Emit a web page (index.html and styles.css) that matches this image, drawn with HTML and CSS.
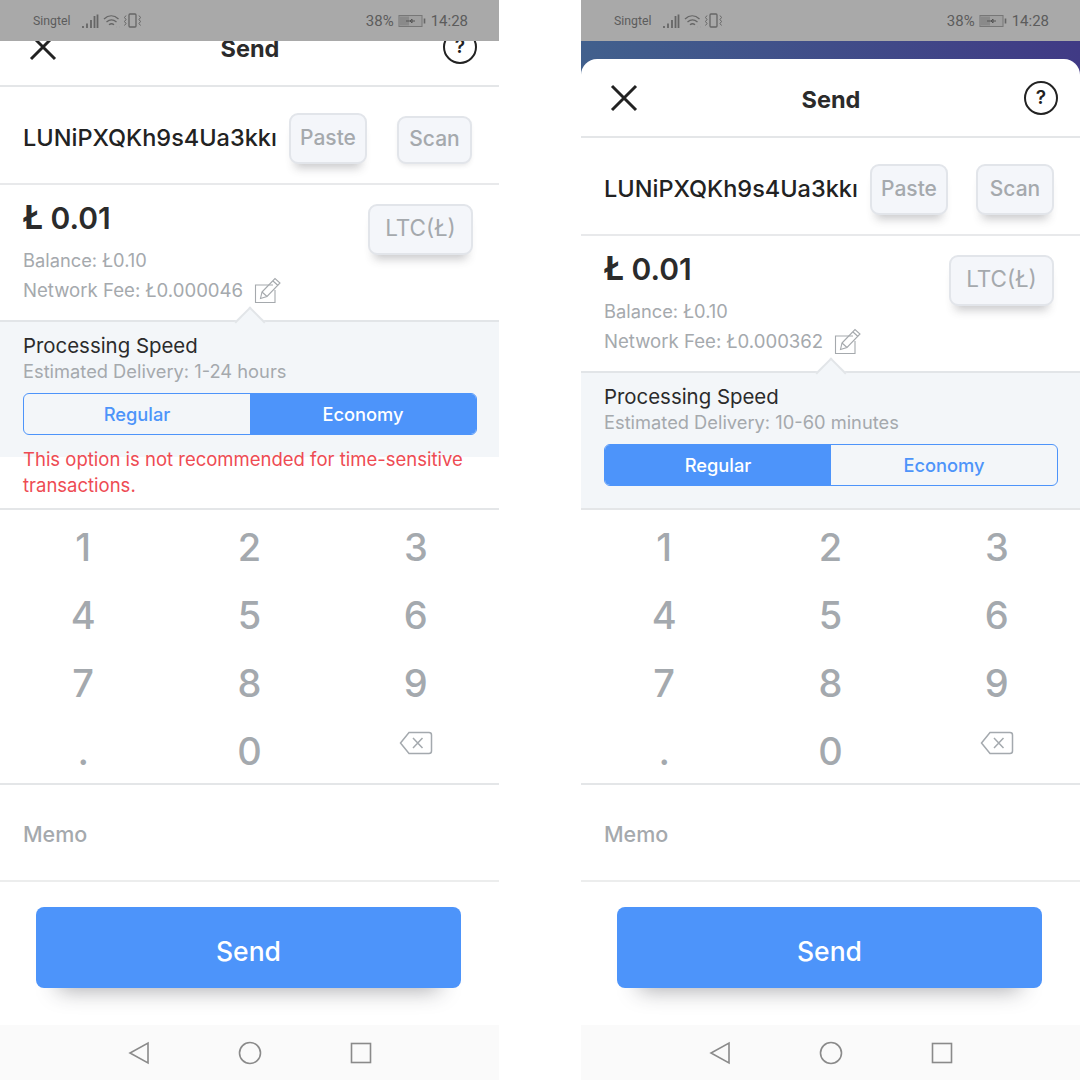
FILE: index.html
```html
<!DOCTYPE html>
<html lang="en">
<head>
    <meta charset="UTF-8">
    <title>Send Litecoin</title>
    <link rel="stylesheet" href="styles.css">
</head>
<body>
    <!-- Economy speed, screen scrolled up a little -->
    <div class="phone phone-scrolled">
        <div class="status-bar">
            <span class="carrier">Singtel</span>
            <svg class="status-icons" width="60" height="16" viewBox="0 0 60 16" fill="none" stroke="#666" stroke-width="1.300">
                <path d="M1 13v2M5 10.500v4.500M9 7v8M12.500 3v12M15.500 1.500v13.500" stroke-width="1.800"/>
                <path d="M22 6c4.500-4.200 10-4.200 14.500 0M24.500 9c3-2.600 7-2.600 10 0M27 11.800c1.600-1.300 3.500-1.300 5 0"/>
                <path d="M34.500 14h.1M37 14h.1" stroke-width="1.500"/>
                <rect x="47" y="1" width="7" height="13" rx="1"/>
                <path d="M44 2.500l-1.500 2 1.500 2-1.500 2 1.500 2 -1.500 2M57 2.500l1.500 2-1.500 2 1.500 2-1.500 2 1.500 2" stroke-width="1"/>
            </svg>
            <span class="status-right">
                <span>38%</span>
                <svg width="29" height="14" viewBox="0 0 29 14" fill="none">
                    <rect x="1" y="1.500" width="23" height="11" fill="#a0a0a0" stroke="#777"/>
                    <rect x="2" y="2.500" width="9" height="9" fill="#8a8a8a"/>
                    <path d="M26.500 4.500v5" stroke="#666" stroke-width="1.600"/>
                    <path d="M8 7h9M12 7l2-2v4z" stroke="#555"/>
                </svg>
                <span>14:28</span>
            </span>
        </div>
        <div class="sheet">
            <div class="sheet-header">
                <svg class="icon-close" width="28" height="28" viewBox="0 0 28 28"><path d="M2 2l24 24M26 2L2 26" stroke="#222" stroke-width="3" fill="none"/></svg>
                <span class="sheet-title">Send</span>
                <span class="icon-help">?</span>
            </div>
            <div class="address-row">
                <span class="address">LUNiPXQKh9s4Ua3kkı</span>
                <button class="ghost-btn paste-btn">Paste</button>
                <button class="ghost-btn scan-btn flat">Scan</button>
            </div>
            <div class="amount-row">
                <div class="amount-info">
                    <div class="amount"><span class="amount-sign">Ł</span> 0.01</div>
                    <div class="meta balance">Balance: Ł0.10</div>
                    <div class="meta fee">Network Fee: Ł0.000046
                        <svg width="28" height="28" viewBox="0 0 28 28" fill="none" stroke="#a5a9ad" stroke-width="1.100">
                            <path d="M19 9H1.500v17.500H21V14"/>
                            <path d="M8 16L21 2.500l5 4.500L13 20.500l-6.500 2z"/>
                            <path d="M19 5l5 4.500M8 16l5 4.500"/>
                        </svg>
                    </div>
                </div>
                <button class="ghost-btn currency-btn">LTC(Ł)</button>
            </div>
            <div class="speed-panel">
                <div class="speed-title">Processing Speed</div>
                <div class="meta speed-eta">Estimated Delivery: 1-24 hours</div>
                <div class="segments">
                    <span class="segment">Regular</span>
                    <span class="segment active">Economy</span>
                </div>
            </div>
            <div class="warning">This option is not recommended for time-sensitive transactions.</div>
            <div class="keypad">
                <span class="key">1</span><span class="key">2</span><span class="key">3</span>
                <span class="key">4</span><span class="key">5</span><span class="key">6</span>
                <span class="key">7</span><span class="key">8</span><span class="key">9</span>
                <span class="key key-dot">.</span><span class="key">0</span>
                <span class="key key-back">
                    <svg width="34" height="24" viewBox="0 0 34 24" fill="none" stroke="#a4a9ae" stroke-width="1.500">
                        <path d="M10 1.500h20a2.500 2.500 0 0 1 2.500 2.500v16a2.500 2.500 0 0 1-2.500 2.500H10L1.500 12z"/>
                        <path d="M14 7l9.500 10M23.500 7L14 17"/>
                    </svg>
                </span>
            </div>
            <div class="memo">Memo</div>
            <div class="send-wrap"><button class="send-btn">Send</button></div>
        </div>
        <div class="nav-bar">
            <svg width="22" height="24" viewBox="0 0 22 24" fill="none" stroke="#8a8a8a" stroke-width="1.600"><path d="M20 2v20L2 12z"/></svg>
            <svg width="24" height="24" viewBox="0 0 24 24" fill="none" stroke="#8a8a8a" stroke-width="1.600"><circle cx="12" cy="12" r="10.500"/></svg>
            <svg width="22" height="22" viewBox="0 0 22 22" fill="none" stroke="#8a8a8a" stroke-width="1.600"><rect x="1.500" y="1.500" width="19" height="19"/></svg>
        </div>
    </div>

    <!-- Regular speed, sheet at full height -->
    <div class="phone">
        <div class="status-bar">
            <span class="carrier">Singtel</span>
            <svg class="status-icons" width="60" height="16" viewBox="0 0 60 16" fill="none" stroke="#666" stroke-width="1.300">
                <path d="M1 13v2M5 10.500v4.500M9 7v8M12.500 3v12M15.500 1.500v13.500" stroke-width="1.800"/>
                <path d="M22 6c4.500-4.200 10-4.200 14.500 0M24.500 9c3-2.600 7-2.600 10 0M27 11.800c1.600-1.300 3.500-1.300 5 0"/>
                <path d="M34.500 14h.1M37 14h.1" stroke-width="1.500"/>
                <rect x="47" y="1" width="7" height="13" rx="1"/>
                <path d="M44 2.500l-1.500 2 1.500 2-1.500 2 1.500 2 -1.500 2M57 2.500l1.500 2-1.500 2 1.500 2-1.500 2 1.500 2" stroke-width="1"/>
            </svg>
            <span class="status-right">
                <span>38%</span>
                <svg width="29" height="14" viewBox="0 0 29 14" fill="none">
                    <rect x="1" y="1.500" width="23" height="11" fill="#a0a0a0" stroke="#777"/>
                    <rect x="2" y="2.500" width="9" height="9" fill="#8a8a8a"/>
                    <path d="M26.500 4.500v5" stroke="#666" stroke-width="1.600"/>
                    <path d="M8 7h9M12 7l2-2v4z" stroke="#555"/>
                </svg>
                <span>14:28</span>
            </span>
        </div>
        <div class="wallet-band"></div>
        <div class="sheet sheet-rounded">
            <div class="sheet-header">
                <svg class="icon-close" width="28" height="28" viewBox="0 0 28 28"><path d="M2 2l24 24M26 2L2 26" stroke="#222" stroke-width="3" fill="none"/></svg>
                <span class="sheet-title">Send</span>
                <span class="icon-help">?</span>
            </div>
            <div class="address-row">
                <span class="address">LUNiPXQKh9s4Ua3kkı</span>
                <button class="ghost-btn paste-btn">Paste</button>
                <button class="ghost-btn scan-btn">Scan</button>
            </div>
            <div class="amount-row">
                <div class="amount-info">
                    <div class="amount"><span class="amount-sign">Ł</span> 0.01</div>
                    <div class="meta balance">Balance: Ł0.10</div>
                    <div class="meta fee">Network Fee: Ł0.000362
                        <svg width="28" height="28" viewBox="0 0 28 28" fill="none" stroke="#a5a9ad" stroke-width="1.100">
                            <path d="M19 9H1.500v17.500H21V14"/>
                            <path d="M8 16L21 2.500l5 4.500L13 20.500l-6.500 2z"/>
                            <path d="M19 5l5 4.500M8 16l5 4.500"/>
                        </svg>
                    </div>
                </div>
                <button class="ghost-btn currency-btn">LTC(Ł)</button>
            </div>
            <div class="speed-panel">
                <div class="speed-title">Processing Speed</div>
                <div class="meta speed-eta">Estimated Delivery: 10-60 minutes</div>
                <div class="segments">
                    <span class="segment active">Regular</span>
                    <span class="segment">Economy</span>
                </div>
            </div>
            <div class="keypad">
                <span class="key">1</span><span class="key">2</span><span class="key">3</span>
                <span class="key">4</span><span class="key">5</span><span class="key">6</span>
                <span class="key">7</span><span class="key">8</span><span class="key">9</span>
                <span class="key key-dot">.</span><span class="key">0</span>
                <span class="key key-back">
                    <svg width="34" height="24" viewBox="0 0 34 24" fill="none" stroke="#a4a9ae" stroke-width="1.500">
                        <path d="M10 1.500h20a2.500 2.500 0 0 1 2.500 2.500v16a2.500 2.500 0 0 1-2.500 2.500H10L1.500 12z"/>
                        <path d="M14 7l9.500 10M23.500 7L14 17"/>
                    </svg>
                </span>
            </div>
            <div class="memo">Memo</div>
            <div class="send-wrap"><button class="send-btn">Send</button></div>
        </div>
        <div class="nav-bar">
            <svg width="22" height="24" viewBox="0 0 22 24" fill="none" stroke="#8a8a8a" stroke-width="1.600"><path d="M20 2v20L2 12z"/></svg>
            <svg width="24" height="24" viewBox="0 0 24 24" fill="none" stroke="#8a8a8a" stroke-width="1.600"><circle cx="12" cy="12" r="10.500"/></svg>
            <svg width="22" height="22" viewBox="0 0 22 22" fill="none" stroke="#8a8a8a" stroke-width="1.600"><rect x="1.500" y="1.500" width="19" height="19"/></svg>
        </div>
    </div>
</body>
</html>
```

FILE: styles.css
```css
* {
    box-sizing: border-box;
}
body {
    margin: 0;
    width: 1080px;
    height: 1080px;
    display: flex;
    justify-content: space-between;
    background: #ffffff;
    font-family: 'Inter', 'Noto Sans', sans-serif;
    overflow: hidden;
}
.phone {
    width: 499px;
    height: 1080px;
    display: flex;
    flex-direction: column;
    overflow: hidden;
    background: #ffffff;
}
.status-bar {
    position: relative;
    z-index: 2;
    flex: none;
    height: 41px;
    padding: 1px 31px 0 33px;
    display: flex;
    align-items: center;
    background: #a9a9a9;
    color: #5c5c5c;
    font-family: 'Roboto', sans-serif;
}
.carrier {
    font-size: 12.300px;
}
.status-icons {
    margin-left: 11px;
}
.status-right {
    margin-left: auto;
    display: flex;
    align-items: center;
    gap: 4px;
    font-size: 15px;
}
.wallet-band {
    flex: none;
    height: 36px;
    margin-bottom: -18px;
    background: linear-gradient(90deg, #41608d, #403a85);
}
.sheet {
    position: relative;
    flex: none;
    height: 966px;
    background: #ffffff;
}
.sheet-rounded {
    border-radius: 16px 16px 0 0;
}
.phone-scrolled .sheet {
    margin-top: -33px;
}
.sheet-header {
    height: 79px;
    padding: 0 22px 0 29px;
    display: flex;
    align-items: center;
    justify-content: space-between;
    border-bottom: 2px solid #e4e6e8;
}
.sheet-title {
    padding-top: 3px;
    font-size: 23.500px;
    font-weight: 700;
    color: #2b2b2b;
}
.icon-help {
    width: 34px;
    height: 34px;
    border: 2px solid #222;
    border-radius: 50%;
    display: flex;
    align-items: center;
    justify-content: center;
    font-size: 19px;
    font-weight: 600;
    color: #222;
}
.address-row {
    height: 98px;
    padding-left: 23px;
    display: flex;
    align-items: center;
    border-bottom: 2px solid #e8e9eb;
}
.address {
    width: 254px;
    flex: none;
    padding-top: 4px;
    white-space: nowrap;
    font-size: 23.500px;
    font-weight: 500;
    color: #222222;
}
.ghost-btn {
    padding: 0 0 2px;
    font-family: inherit;
    color: #a5a9ad;
    background: #f4f6fa;
    border: 2px solid #e2e5ea;
    border-radius: 9px;
    box-shadow: 0 10px 10px -6px rgba(60, 60, 70, 0.28);
}
.ghost-btn.flat {
    box-shadow: 0 3px 5px -2px rgba(60, 60, 70, 0.15);
}
.paste-btn {
    width: 78px;
    height: 51px;
    margin: 6px 0 0 12px;
    font-size: 21px;
    font-weight: 500;
}
.scan-btn {
    width: 78px;
    height: 51px;
    margin: 6px 0 0 28px;
    font-size: 21px;
    font-weight: 500;
}
.phone-scrolled .scan-btn {
    width: 75px;
    height: 48px;
    margin: 9px 0 0 30px;
}
.amount-row {
    height: 135px;
    padding: 15px 26px 0 23px;
    display: flex;
    justify-content: space-between;
    align-items: flex-start;
}
.amount {
    font-size: 30px;
    font-weight: 600;
    line-height: 34px;
    color: #2b2b2b;
}
.amount-sign {
    font-size: 33px;
    font-weight: 700;
}
.meta {
    font-size: 18.300px;
    color: #a5a9ad;
}
.balance {
    margin-top: 12px;
    line-height: 26px;
}
.fee {
    margin-top: 3px;
    line-height: 26px;
    font-size: 18.600px;
    display: flex;
    align-items: center;
    gap: 11px;
}
.currency-btn {
    width: 105px;
    height: 51px;
    margin-top: 4px;
    padding-bottom: 5px;
    font-size: 22.500px;
}
.speed-panel {
    position: relative;
    height: 137px;
    padding: 10px 22px 0 23px;
    background: #f3f6f9;
    border-top: 2px solid #e2e5e8;
}
/* little caret that points at the fee line */
.speed-panel::before {
    content: "";
    position: absolute;
    left: 239px;
    top: -11px;
    width: 20px;
    height: 20px;
    background: #f3f6f9;
    border-top: 2px solid #e2e5e8;
    border-left: 2px solid #e2e5e8;
    transform: rotate(45deg);
}
.speed-title {
    position: relative;
    font-size: 20.400px;
    line-height: 27px;
    color: #2b2b2b;
}
.speed-eta {
    line-height: 24px;
}
.segments {
    margin-top: 10px;
    height: 42px;
    display: flex;
    border: 1.500px solid #4d94fa;
    border-radius: 6px;
    overflow: hidden;
}
.segment {
    flex: 1;
    display: flex;
    align-items: center;
    justify-content: center;
    font-size: 18.300px;
    font-weight: 500;
    color: #4d94fa;
}
.segment.active {
    color: #ffffff;
    background: #4d94fa;
}
.warning {
    position: relative;
    height: 62px;
    margin-top: -11px;
    padding: 0 23px;
    font-size: 18.500px;
    line-height: 26px;
    color: #ee4b53;
}
.keypad {
    height: 275px;
    padding-top: 3px;
    display: grid;
    grid-template-columns: repeat(3, 1fr);
    grid-auto-rows: 68px;
    border-top: 2px solid #e4e6e8;
    overflow: hidden;
}
.key {
    display: flex;
    align-items: center;
    justify-content: center;
    font-size: 38px;
    font-weight: 500;
    color: #a4a9ae;
}
.key-back {
    padding-bottom: 17px;
}
.memo {
    height: 99px;
    padding: 3px 0 0 23px;
    display: flex;
    align-items: center;
    font-size: 21.500px;
    font-weight: 500;
    color: #a5a9ad;
    border-top: 2px solid #e4e6e8;
    border-bottom: 2px solid #eceded;
}
.send-wrap {
    padding: 25px 38px 0 36px;
}
.send-btn {
    width: 100%;
    height: 81px;
    padding: 6px 0 0;
    border: none;
    border-radius: 8px;
    font-family: inherit;
    font-size: 26.500px;
    font-weight: 500;
    color: #ffffff;
    background: #4d94fa;
    box-shadow: 0 24px 22px -22px rgba(40, 40, 50, 0.4);
}
.nav-bar {
    position: relative;
    flex: none;
    margin-top: auto;
    height: 55px;
    display: flex;
    align-items: center;
    justify-content: center;
    gap: 88px;
    background: #fafafa;
}
```
